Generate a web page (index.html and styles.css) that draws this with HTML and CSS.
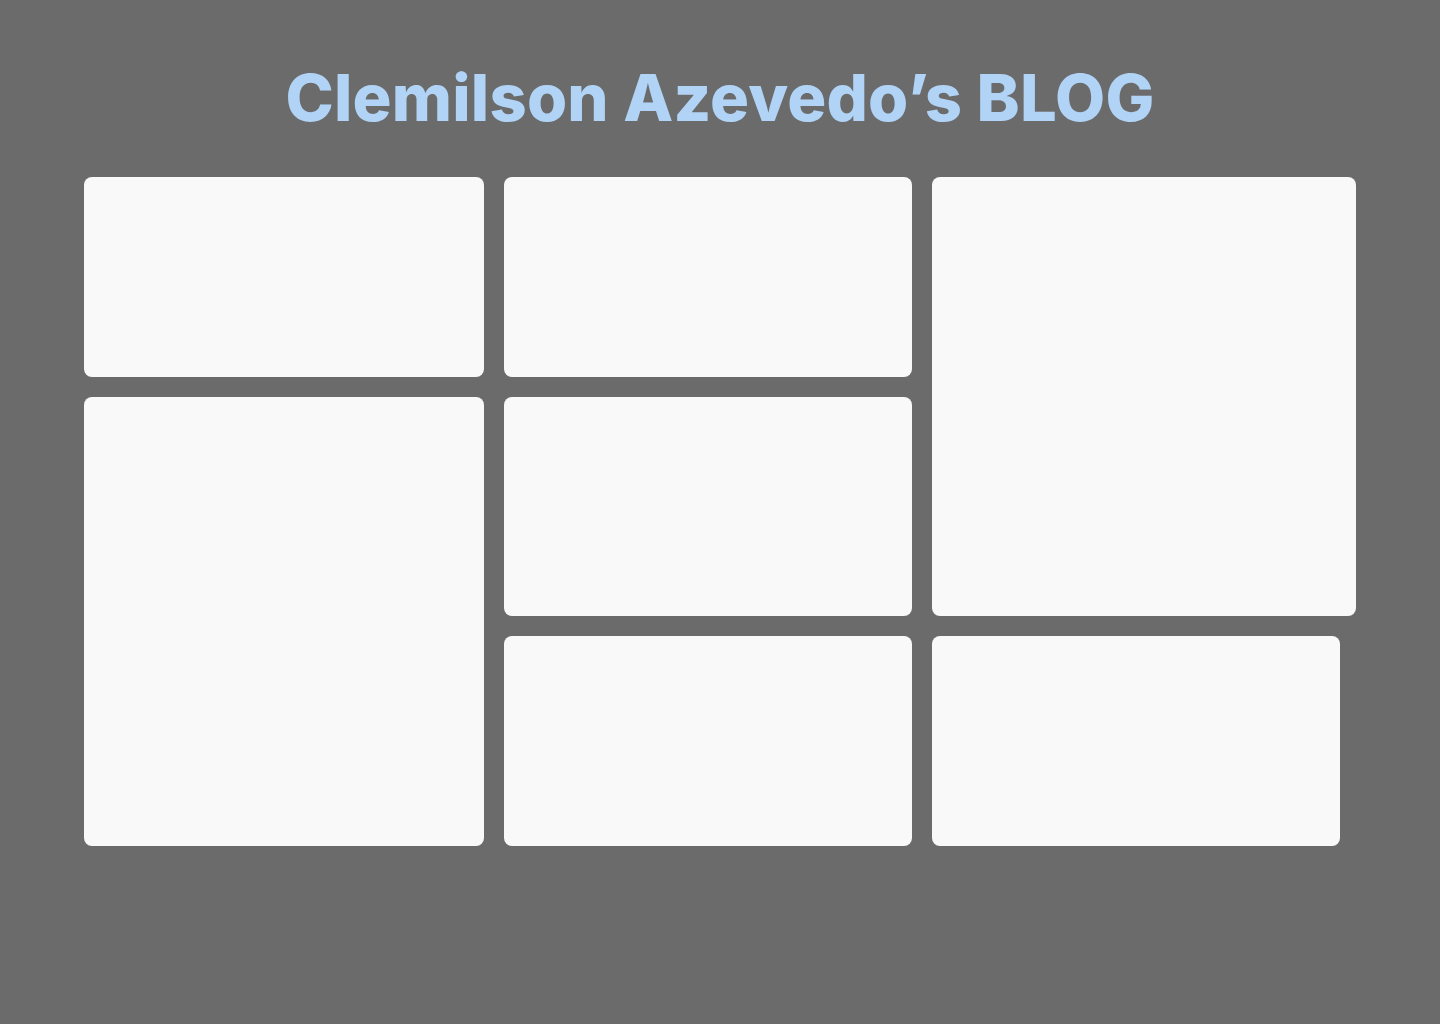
FILE: index.html
```html
<!DOCTYPE html>
<html lang="en">
<head>
<meta charset="utf-8">
<title>Clemilson Azevedo’s BLOG</title>
<link rel="stylesheet" href="styles.css">
</head>
<body>
<main class="page">
  <h1 class="title">Clemilson Azevedo’s BLOG</h1>
  <section class="grid">
    <article class="card card-a"></article>
    <article class="card card-b"></article>
    <article class="card card-c"></article>
    <article class="card card-d"></article>
    <article class="card card-e"></article>
    <article class="card card-f"></article>
    <article class="card card-g"></article>
  </section>
</main>
</body>
</html>
```

FILE: styles.css
```css
html, body {
  margin: 0;
  padding: 0;
  background: #6b6b6b;
  height: 100%;
}

.page {
  display: flex;
  flex-direction: column;
  align-items: center;
  padding-top: 56px;
}

.title {
  margin: 0;
  font-family: Inter, "Noto Sans", sans-serif;
  font-weight: 800;
  font-size: 65px;
  line-height: 84px;
  color: #b1d3f5;
  letter-spacing: 0.2px;
}

.grid {
  margin-top: 37px;
  display: grid;
  grid-template-columns: 400px 408px 424px;
  grid-template-rows: 200px 219px 210px;
  gap: 20px;
}

.card {
  background: #f9f9f9;
  border-radius: 8px;
}

.card-a { grid-column: 1; grid-row: 1; }
.card-b { grid-column: 2; grid-row: 1; }
.card-c { grid-column: 3; grid-row: 1 / span 2; }
.card-d { grid-column: 1; grid-row: 2 / span 2; }
.card-e { grid-column: 2; grid-row: 2; }
.card-f { grid-column: 2; grid-row: 3; }
.card-g { grid-column: 3; grid-row: 3; width: 408px; }
```
